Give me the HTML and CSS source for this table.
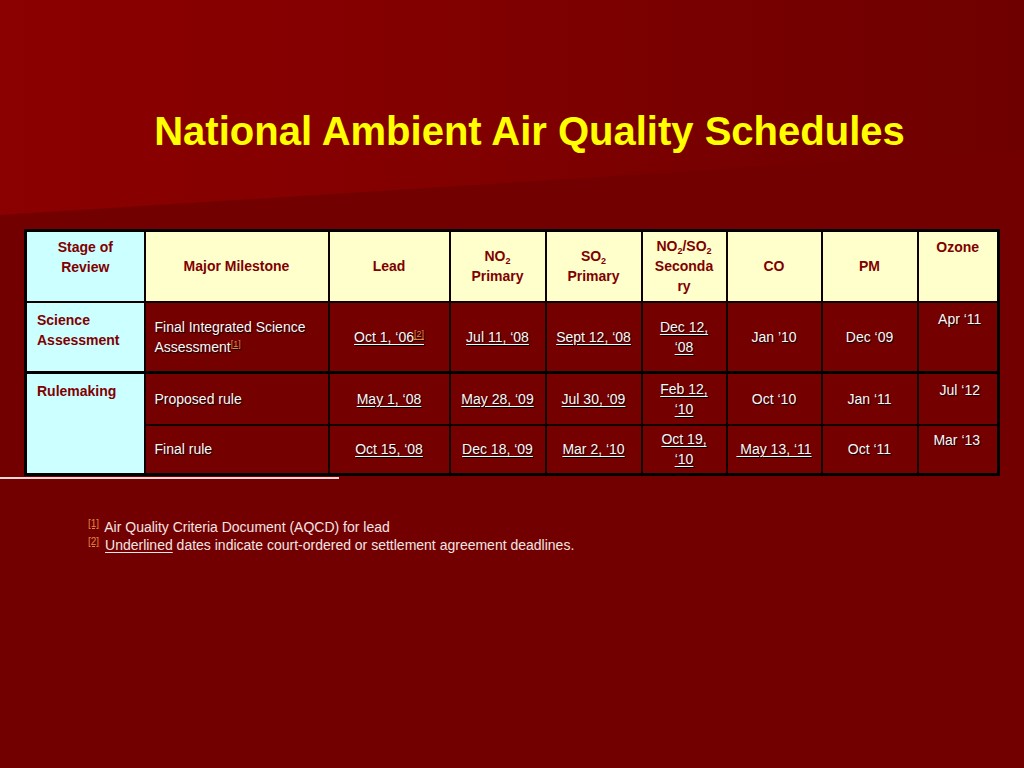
FILE: index.html
```html
<!DOCTYPE html>
<html lang="en">
<head>
<meta charset="utf-8">
<title>National Ambient Air Quality Schedules</title>
<link rel="stylesheet" href="styles.css">
</head>
<body>
<div class="slide">
  <h1 class="title">National Ambient Air Quality Schedules</h1>
  <table class="sched">
    <colgroup>
      <col class="c1"><col class="c2"><col class="c3"><col class="c4"><col class="c5"><col class="c6"><col class="c7"><col class="c8"><col class="c9">
    </colgroup>
    <tr class="head">
      <th class="stage top">Stage of<br>Review</th>
      <th>Major Milestone</th>
      <th>Lead</th>
      <th>NO<sub>2</sub><br>Primary</th>
      <th>SO<sub>2</sub><br>Primary</th>
      <th>NO<sub>2</sub>/SO<sub>2</sub><br>Seconda<br>ry</th>
      <th>CO</th>
      <th>PM</th>
      <th class="top">Ozone</th>
    </tr>
    <tr class="r1">
      <th class="stage left top">Science<br>Assessment</th>
      <td class="left">Final Integrated Science<br>Assessment<a class="ref">[1]</a></td>
      <td><u>Oct 1, ‘06<a class="ref">[2]</a></u></td>
      <td><u>Jul 11, ‘08</u></td>
      <td><u>Sept 12, ‘08</u></td>
      <td><u>Dec 12,</u><br><u>‘08</u></td>
      <td>Jan ’10</td>
      <td>Dec ‘09</td>
      <td class="top oz">Apr ‘11</td>
    </tr>
    <tr class="r2">
      <th class="stage left top" rowspan="2">Rulemaking</th>
      <td class="left">Proposed rule</td>
      <td><u>May 1, ‘08</u></td>
      <td><u>May 28, ‘09</u></td>
      <td><u>Jul 30, ‘09</u></td>
      <td><u>Feb 12,</u><br><u>‘10</u></td>
      <td>Oct ‘10</td>
      <td>Jan ‘11</td>
      <td class="top oz">Jul ‘12</td>
    </tr>
    <tr class="r3">
      <td class="left">Final rule</td>
      <td><u>Oct 15, ‘08</u></td>
      <td><u>Dec 18, ‘09</u></td>
      <td><u>Mar 2, ‘10</u></td>
      <td><u>Oct 19,</u><br><u>‘10</u></td>
      <td><u>&nbsp;May 13, ‘11</u></td>
      <td>Oct ‘11</td>
      <td class="top oz2">Mar ‘13</td>
    </tr>
  </table>
  <div class="rule"></div>
  <div class="notes">
    <p><a class="fn">[1]</a> Air Quality Criteria Document (AQCD) for lead</p>
    <p><a class="fn">[2]</a> <u>Underlined</u> dates indicate court-ordered or settlement agreement deadlines.</p>
  </div>
</div>
</body>
</html>
```

FILE: styles.css
```css
html, body {
  margin: 0;
  padding: 0;
}
body {
  width: 1024px;
  height: 768px;
  overflow: hidden;
  background: #720000;
  font-family: "Liberation Sans", Arial, sans-serif;
}
.slide {
  position: relative;
  width: 1024px;
  height: 768px;
  display: flex;
  flex-direction: column;
  align-items: flex-start;
}
.slide::before {
  content: "";
  position: absolute;
  left: 0;
  top: 0;
  width: 1024px;
  height: 220px;
  background: linear-gradient(to right, #8b0000 0%, #830000 40%, #760000 75%, #6f0000 100%);
  clip-path: polygon(0 0, 100% 0, 100% 150px, 0 215px);
}
.title {
  position: relative;
  margin: 107px 0 0 0;
  width: 1024px;
  box-sizing: border-box;
  padding-left: 35px;
  text-align: center;
  font-size: 40px;
  line-height: 48px;
  font-weight: bold;
  color: #ffff00;
}
.sched {
  position: relative;
  margin: 74px 0 0 24px;
  width: 975px;
  table-layout: fixed;
  border-collapse: collapse;
  border: 3px solid #000;
  font-size: 14px;
  line-height: 20px;
}
.c1 { width: 119px; }
.c2 { width: 184px; }
.c3 { width: 121px; }
.c4 { width: 96px; }
.c5 { width: 96px; }
.c6 { width: 85px; }
.c7 { width: 95px; }
.c8 { width: 96px; }
.c9 { width: 81px; }
.sched th, .sched td {
  border: 2px solid #100000;
  padding: 0 6px;
  text-align: center;
  vertical-align: middle;
}
.sched th {
  color: #800000;
  font-weight: bold;
}
.head th {
  background: #ffffcc;
}
.head { height: 71px; }
.r1 { height: 71px; }
.r2 { height: 52px; }
.r3 { height: 50px; }
.r1 td, .r1 th { border-bottom-width: 3px; border-bottom-color: #000; }
.sched th.stage {
  background: #ccffff;
}
.sched .top {
  vertical-align: top;
  padding-top: 5px;
}
.sched .left {
  text-align: left;
  padding-left: 9px;
}
.sched th.left {
  padding-left: 10px;
  padding-top: 7px;
}
.sched td {
  background: #740000;
  color: #fff6f6;
  text-shadow: 1px 1px 1px #000;
}
.sched td.oz { padding-top: 6px; padding-left: 10px; }
.sched td.oz2 { padding-top: 4px; padding-left: 4px; }
.sched u {
  text-decoration: underline;
  text-underline-offset: 2px;
}
.sched sub {
  font-size: 9px;
  line-height: 0;
  vertical-align: -3px;
}
.ref {
  font-size: 9px;
  color: #e08840;
  vertical-align: 5px;
  line-height: 0;
  text-decoration: underline;
}
.rule {
  position: relative;
  width: 339px;
  height: 2px;
  margin-top: 1px;
  background: #f4d8d8;
}
.notes {
  position: relative;
  margin: 39px 0 0 88px;
  font-size: 14px;
  line-height: 18px;
  color: #f5e4e4;
}
.notes p {
  margin: 0;
}
.fn {
  font-size: 10px;
  color: #e08840;
  vertical-align: 5px;
  line-height: 0;
  text-decoration: underline;
  margin-right: 2px;
}
.notes u {
  text-underline-offset: 2px;
}
```
